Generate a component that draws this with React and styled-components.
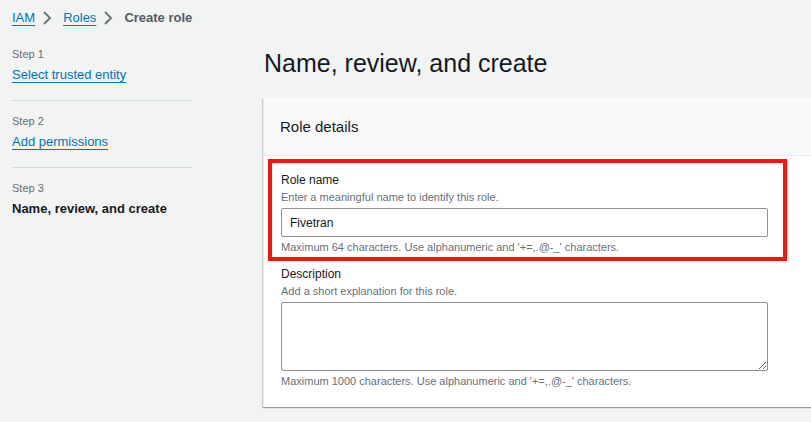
import React from 'react';
import styled, { createGlobalStyle } from 'styled-components';

const GlobalStyle = createGlobalStyle`
    body {
        margin: 0;
        background-color: #f2f3f3;
        font-family: "Liberation Sans", Arial, sans-serif;
        color: #16191f;
        overflow: hidden;
    }
`;

const steps = [
    { label: 'Step 1', title: 'Select trusted entity', done: true },
    { label: 'Step 2', title: 'Add permissions', done: true },
    { label: 'Step 3', title: 'Name, review, and create', done: false },
];

const Chevron = () => (
    <ChevronIcon viewBox="0 0 16 16">
        <path d="M5 2 L11 8 L5 14" fill="none" stroke="currentColor" strokeWidth="1.8" strokeLinejoin="miter" />
    </ChevronIcon>
);

export default function App() {
    return (
        <Page>
            <GlobalStyle />
            <Breadcrumbs>
                <Crumb href="#">IAM</Crumb>
                <Chevron />
                <Crumb href="#">Roles</Crumb>
                <Chevron />
                <Current>Create role</Current>
            </Breadcrumbs>

            <Layout>
                <Sidebar>
                    {
                        steps.map((step, index) => (
                            <StepItem key={ index } last={ index === steps.length - 1 }>
                                <StepLabel>{ step.label }</StepLabel>
                                {
                                    step.done
                                        ? <StepLink href="#">{ step.title }</StepLink>
                                        : <StepCurrent>{ step.title }</StepCurrent>
                                }
                            </StepItem>
                        ))
                    }
                </Sidebar>

                <Main>
                    <Title>Name, review, and create</Title>
                    <Card>
                        <CardHeader>Role details</CardHeader>
                        <CardBody>
                            <Highlight>
                                <Field>
                                    <Label>Role name</Label>
                                    <Hint>Enter a meaningful name to identify this role.</Hint>
                                    <Input defaultValue="Fivetran" />
                                    <Constraint>Maximum 64 characters. Use alphanumeric and '+=,.@-_' characters.</Constraint>
                                </Field>
                            </Highlight>
                            <Field indent>
                                <Label>Description</Label>
                                <Hint>Add a short explanation for this role.</Hint>
                                <TextArea />
                                <Constraint>Maximum 1000 characters. Use alphanumeric and '+=,.@-_' characters.</Constraint>
                            </Field>
                        </CardBody>
                    </Card>
                </Main>
            </Layout>
        </Page>
    );
}


//#region -= Styled Components =-
const Page = styled.div`
    width: 811px;
    height: 422px;
    overflow: hidden;
`;
const Breadcrumbs = styled.nav`
    display: flex;
    align-items: center;
    height: 16px;
    padding: 10px 12px;
    font-size: 13px;
    line-height: 16px;
`;
const Crumb = styled.a`
    color: #0073bb;
    text-decoration: underline;
    text-underline-offset: 3px;
`;
const ChevronIcon = styled.svg`
    width: 16px;
    height: 16px;
    margin: 0 8px 0 4px;
    color: #687078;
`;
const Current = styled.span`
    color: #545b64;
    font-weight: 700;
`;
const Layout = styled.div`
    display: flex;
`;
const Sidebar = styled.div`
    width: 180px;
    flex-shrink: 0;
    padding: 11px 0 0 12px;
`;
const StepItem = styled.div`
    display: flex;
    flex-direction: column;
    gap: 6px;
    padding-bottom: ${ props => props.last ? '0' : '17px' };
    margin-bottom: ${ props => props.last ? '0' : '13px' };
    border-bottom: ${ props => props.last ? 'none' : '1px solid #d5dbdb' };
`;
const StepLabel = styled.div`
    font-size: 11px;
    line-height: 14px;
    color: #687078;
`;
const StepLink = styled.a`
    font-size: 13px;
    line-height: 16px;
    color: #0073bb;
    text-decoration: underline;
    text-underline-offset: 3px;
`;
const StepCurrent = styled.div`
    font-size: 13px;
    line-height: 16px;
    font-weight: 700;
    color: #16191f;
`;
const Main = styled.div`
    flex: 1;
    margin-left: 71px;
    margin-right: -20px;
    padding-top: 12px;
`;
const Title = styled.h1`
    margin: 0 0 20px 1px;
    font-size: 25px;
    line-height: 30px;
    font-weight: 400;
    color: #16191f;
`;
const Card = styled.div`
    background-color: #ffffff;
    border-left: 1px solid #eaeded;
    box-shadow: 0 1px 1px 0 rgba(0, 28, 36, 0.3), -1px 1px 1px 0 rgba(0, 28, 36, 0.12);
`;
const CardHeader = styled.div`
    height: 57px;
    display: flex;
    align-items: center;
    padding-left: 16px;
    background-color: #fafafa;
    border-bottom: 1px solid #eaeded;
    font-size: 15px;
    color: #16191f;
`;
const CardBody = styled.div`
    padding: 3px 0 19px 0;
`;
const Highlight = styled.div`
    width: 502px;
    margin-left: 4px;
    padding: 9px 0 3px 9px;
    border: 4px solid #f8140b;
`;
const Field = styled.div`
    display: flex;
    flex-direction: column;
    width: 487px;
    padding-left: ${ props => props.indent ? '17px' : '0' };
    margin-top: ${ props => props.indent ? '5px' : '0' };
`;
const Label = styled.div`
    font-size: 12px;
    line-height: 16px;
    color: #16191f;
`;
const Hint = styled.div`
    margin-top: 2px;
    font-size: 11px;
    line-height: 14px;
    color: #687078;
`;
const Input = styled.input`
    box-sizing: border-box;
    height: 29px;
    margin-top: 4px;
    padding: 0 8px;
    border: 1px solid #879596;
    border-radius: 2px;
    font-family: "Liberation Sans", Arial, sans-serif;
    font-size: 12px;
    color: #16191f;
    outline: none;
`;
const TextArea = styled.textarea`
    box-sizing: border-box;
    height: 69px;
    margin-top: 4px;
    padding: 4px 8px;
    border: 1px solid #879596;
    border-radius: 2px;
    font-family: "Liberation Sans", Arial, sans-serif;
    font-size: 12px;
    outline: none;
`;
const Constraint = styled.div`
    margin-top: 3px;
    font-size: 11px;
    line-height: 14px;
    color: #687078;
`;
//#endregion
